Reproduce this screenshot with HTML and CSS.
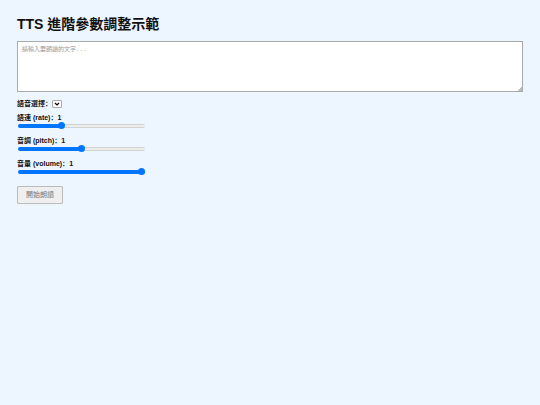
FILE: index.html
```html
<!DOCTYPE html>
<html lang="zh-TW">
<head>
    <meta charset="UTF-8">
    <meta name="viewport" content="width=device-width, initial-scale=1.0">
    <title>TTS 進階參數調整示範</title>
    <link rel="stylesheet" href="styles.css">
</head>
<body>
    <h1>TTS 進階參數調整示範</h1>
    <textarea id="text" class="text-input" aria-label="朗讀文字" placeholder="請輸入要朗讀的文字..."></textarea>

    <div class="voice-row">
        <label for="voice" lang="zh-CN">語音選擇：</label>
        <select id="voice" class="voice-select"></select>
    </div>

    <div class="control">
        <label for="rate" lang="zh-CN">語速 (rate)：<span class="value">1</span></label>
        <input type="range" id="rate" min="0.5" max="2" step="0.1" value="1" style="--fill: 33%">
    </div>
    <div class="control">
        <label for="pitch" lang="zh-CN">音調 (pitch)：<span class="value">1</span></label>
        <input type="range" id="pitch" min="0" max="2" step="0.1" value="1" style="--fill: 50%">
    </div>
    <div class="control">
        <label for="volume" lang="zh-CN">音量 (volume)：<span class="value">1</span></label>
        <input type="range" id="volume" min="0" max="1" step="0.1" value="1" style="--fill: 100%">
    </div>

    <button id="speak" class="speak-btn" type="button" disabled>開始朗讀</button>

    <script>
    const textInput = document.getElementById('text');
    const voiceSelect = document.getElementById('voice');
    const speakBtn = document.getElementById('speak');

    // Keep the label value and the filled part of the track in step
    document.querySelectorAll('.control input').forEach(function(input) {
        input.addEventListener('input', function() {
            const percent = (input.value - input.min) / (input.max - input.min) * 100;
            input.style.setProperty('--fill', percent + '%');
            input.parentElement.querySelector('.value').innerText = input.value;
        });
    });

    textInput.addEventListener('input', function() {
        speakBtn.disabled = !textInput.value.trim();
    });

    speakBtn.addEventListener('click', function() {
        const utterance = new SpeechSynthesisUtterance(textInput.value);
        const voice = speechSynthesis.getVoices().find(v => v.name === voiceSelect.value);
        if (voice) utterance.voice = voice;
        utterance.rate = document.getElementById('rate').value;
        utterance.pitch = document.getElementById('pitch').value;
        utterance.volume = document.getElementById('volume').value;
        speechSynthesis.speak(utterance);
    });
    </script>
</body>
</html>
```
FILE: styles.css
```css
* { box-sizing: border-box; }
body {
    font-family: "Liberation Sans", Arial, "Noto Sans CJK TC", sans-serif;
    font-size: 7px;
    line-height: 8px;
    margin: 0;
    padding: 16px 17px;
    background-color: #edf5ff;
    color: #111;
}
h1 {
    font-size: 14px;
    line-height: 16px;
    margin: 0 0 9px;
}
.text-input {
    display: block;
    width: 100%;
    height: 51px;
    margin: 0;
    padding: 4px;
    border: 1px solid #aaa;
    border-radius: 0;
    background-color: #fff;
    font-family: "Liberation Mono", "Noto Sans CJK TC", monospace;
    font-size: 6px;
    line-height: 8px;
}
.text-input::placeholder { color: #999; }
.text-input::-webkit-resizer {
    background: linear-gradient(135deg, transparent 50%, #bbb 50%) right bottom / 5px 5px no-repeat;
}
label {
    font-family: "Liberation Sans", Arial, "Noto Sans CJK SC", sans-serif;
    font-weight: bold;
}
.voice-row {
    display: flex;
    align-items: center;
    margin: 8px 0 6px;
}
.voice-select {
    appearance: none;
    width: 10px;
    height: 8px;
    padding: 0;
    border: 1px solid #aaa;
    border-radius: 1px;
    background: #fff url("data:image/svg+xml,%3Csvg xmlns='http://www.w3.org/2000/svg' viewBox='0 0 6 4'%3E%3Cpath d='M1 1l2 2 2-2' fill='none' stroke='%23000' stroke-width='1.2'/%3E%3C/svg%3E") center / 6px 4px no-repeat;
}
.control {
    display: flex;
    flex-direction: column;
    margin-bottom: 7px;
}
input[type="range"] {
    appearance: none;
    width: 127px;
    height: 8px;
    margin: 0 1px;
    background: transparent;
}
input[type="range"]::-webkit-slider-runnable-track {
    height: 4px;
    border-radius: 2px;
    background:
        linear-gradient(#0075ff, #0075ff) 0 0 / var(--fill) 100% no-repeat,
        linear-gradient(#c4c4c4, #efefef 40%, #efefef 60%, #c4c4c4);
}
input[type="range"]::-webkit-slider-thumb {
    appearance: none;
    width: 7px;
    height: 7px;
    margin-top: -2px;
    border-radius: 50%;
    background-color: #0075ff;
}
.speak-btn {
    display: block;
    margin-top: 10px;
    padding: 4px 8px;
    border: 1px solid #bbb;
    border-radius: 1px;
    background-color: #efefef;
    color: #111;
    font-family: inherit;
    font-size: 7px;
    line-height: 8px;
}
.speak-btn:disabled { color: #777; }
```
